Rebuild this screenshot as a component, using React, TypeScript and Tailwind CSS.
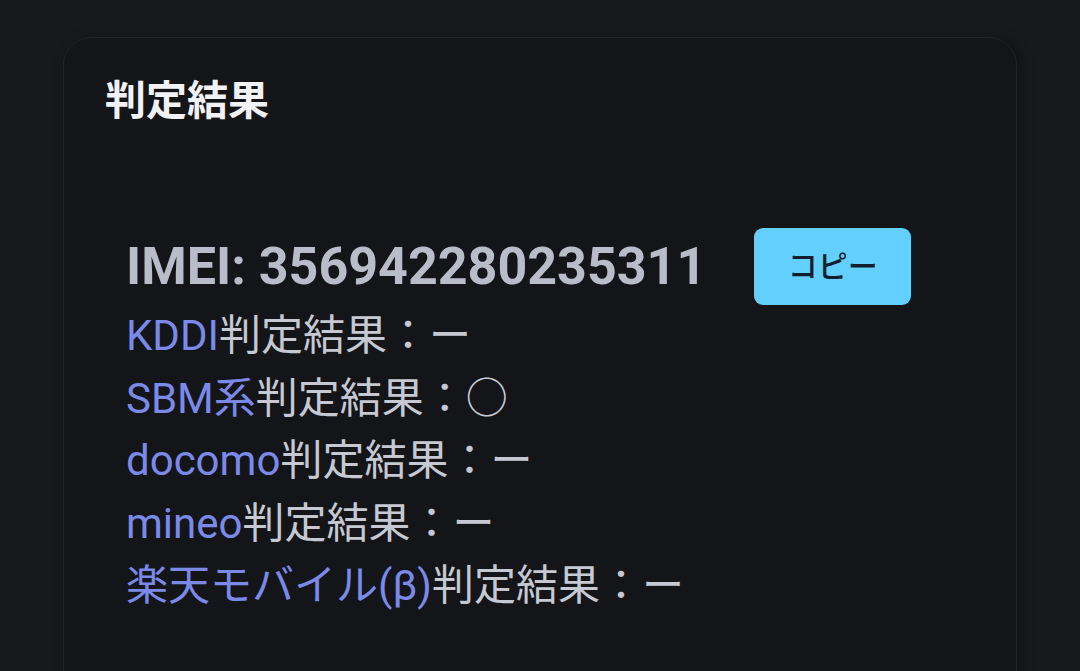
import React from "react";

const rows: { label: string; value: string }[] = [
  { label: "KDDI", value: "ー" },
  { label: "SBM系", value: "○" },
  { label: "docomo", value: "ー" },
  { label: "mineo", value: "ー" },
  { label: "楽天モバイル(β)", value: "ー" },
];

export default function App() {
  return (
    <div
      className="h-[671px] w-[1080px] overflow-hidden bg-[#18191d] pt-[37px] px-[63px]"
      style={{ fontFamily: 'Roboto, "Noto Sans CJK JP", sans-serif' }}
    >
      <div className="min-h-[800px] rounded-[28px] border border-[#222328] bg-[#141519] pl-[41px] pt-[33px] shadow-[4px_0_14px_rgba(0,0,0,0.25)]">
        <h2 className="text-[41px] font-bold leading-[60px] text-[#f2f2f4]">判定結果</h2>
        <div className="mt-[97px] pl-[21px]">
          <div className="flex items-center gap-[48px]">
            <span className="text-[52px] font-bold leading-[62px] text-[#b9bdc9]">
              IMEI: 356942280235311
            </span>
            <button className="flex h-[77px] w-[157px] items-center justify-center rounded-[9px] bg-[#62cffd] text-[30px] font-medium text-[#0f1f2c]">
              コピー
            </button>
          </div>
          <div className="flex flex-col">
            {rows.map((r) => (
              <div key={r.label} className="text-[42px] leading-[62.5px] text-[#c6c9d1]">
                <span className="text-[#7b8ae8]">{r.label}</span>
                判定結果：{r.value}
              </div>
            ))}
          </div>
        </div>
      </div>
    </div>
  );
}
